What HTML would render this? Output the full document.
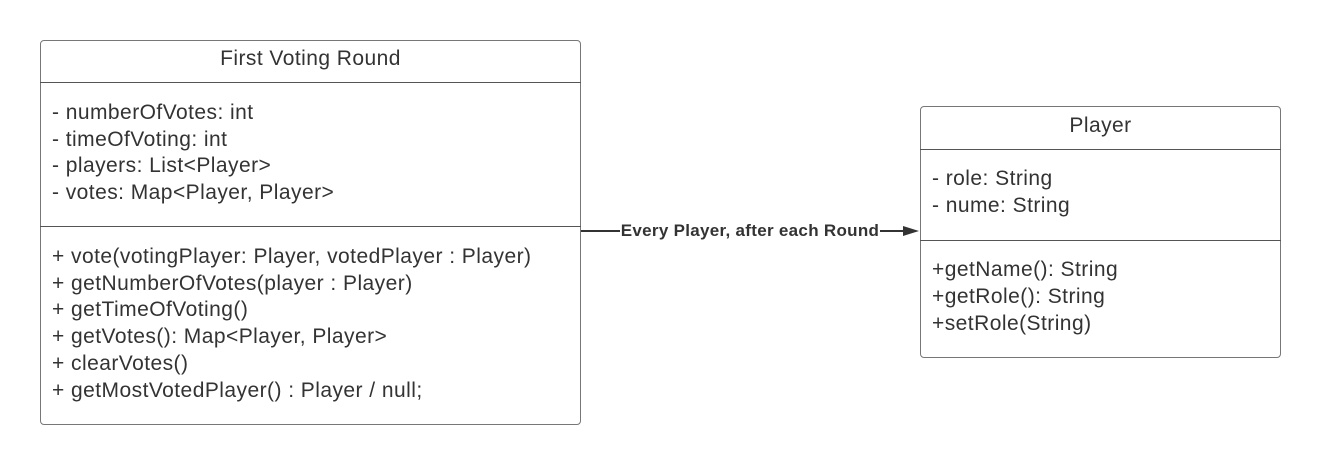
<!DOCTYPE html>
<html><head><style>
body{margin:0;width:1320px;height:464px;background:#fff;position:relative;font-family:"Liberation Sans",sans-serif;color:#333;overflow:hidden}
.b{position:absolute;border:1px solid #777;border-radius:4px;box-sizing:border-box}
.h{position:absolute;left:0;right:0;height:1px;background:#555}
.t{position:absolute;font-size:21px;letter-spacing:0.45px;white-space:nowrap;line-height:20px}
</style></head><body>
<div class="b" style="left:40px;top:40px;width:541px;height:385px"></div>
<div class="h" style="left:40px;width:541px;top:82px"></div>
<div class="h" style="left:40px;width:541px;top:226px"></div>
<div class="t" style="left:40px;width:541px;text-align:center;top:49px">First Voting Round</div>
<div class="t" style="left:52px;top:103px">- numberOfVotes: int</div>
<div class="t" style="left:52px;top:130px">- timeOfVoting: int</div>
<div class="t" style="left:52px;top:156px">- players: List&lt;Player&gt;</div>
<div class="t" style="left:52px;top:183px">- votes: Map&lt;Player, Player&gt;</div>
<div class="t" style="left:52px;top:247px">+ vote(votingPlayer: Player, votedPlayer : Player)</div>
<div class="t" style="left:52px;top:274px">+ getNumberOfVotes(player : Player)</div>
<div class="t" style="left:52px;top:300px">+ getTimeOfVoting()</div>
<div class="t" style="left:52px;top:327px">+ getVotes(): Map&lt;Player, Player&gt;</div>
<div class="t" style="left:52px;top:354px">+ clearVotes()</div>
<div class="t" style="left:52px;top:381px">+ getMostVotedPlayer() : Player / null;</div>

<div class="b" style="left:920px;top:106px;width:361px;height:252px"></div>
<div class="h" style="left:920px;width:361px;top:149px"></div>
<div class="h" style="left:920px;width:361px;top:240px"></div>
<div class="t" style="left:920px;width:361px;text-align:center;top:116px">Player</div>
<div class="t" style="left:932px;top:169px">- role: String</div>
<div class="t" style="left:932px;top:196px">- nume: String</div>
<div class="t" style="left:932px;top:260px">+getName(): String</div>
<div class="t" style="left:932px;top:287px">+getRole(): String</div>
<div class="t" style="left:932px;top:314px">+setRole(String)</div>

<svg style="position:absolute;left:0;top:0" width="1320" height="464">
<line x1="581" y1="231" x2="906" y2="231" stroke="#333" stroke-width="2"/>
<polygon points="903,226 919,231 903,236" fill="#333"/>
</svg>
<div style="position:absolute;left:620px;top:221px;width:260px;height:20px;background:#fff;text-align:center;font-weight:bold;font-size:17px;letter-spacing:0.3px;line-height:20px;white-space:nowrap">Every Player, after each Round</div>
</body></html>
